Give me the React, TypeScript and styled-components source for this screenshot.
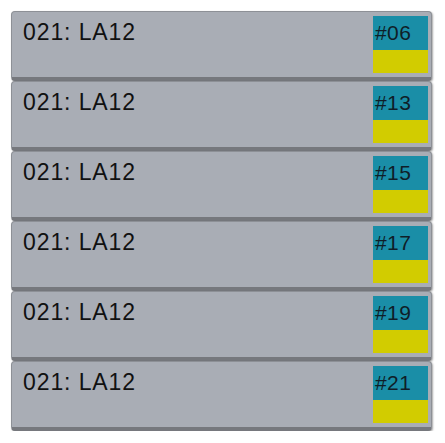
import { FC } from "react";
import styled, { createGlobalStyle } from "styled-components";

const GlobalStyle = createGlobalStyle`
  body {
    margin: 0;
    background: #ffffff;
    font-family: "Liberation Sans", Arial, sans-serif;
  }
`;

const List = styled.div`
  display: flex;
  flex-direction: column;
  padding: 11px 13px 0 11px;
  width: 445px;
  box-sizing: border-box;
`;

const Card = styled.div`
  display: flex;
  justify-content: space-between;
  align-items: flex-start;
  height: 70px;
  box-sizing: border-box;
  padding: 4px 3px 0 11px;
  background: #a9adb5;
  border: 1px solid #8d9096;
  border-bottom: 4px solid #76787d;
  border-radius: 4px;
  box-shadow: 1px 1px 2px rgba(0, 0, 0, 0.35);
`;

const Title = styled.span`
  font-size: 23px;
  line-height: 28px;
  letter-spacing: 0.9px;
  color: #111111;
  padding-top: 2px;
`;

const Badge = styled.div`
  display: flex;
  flex-direction: column;
  width: 55px;
`;

const BadgeTop = styled.div`
  height: 34px;
  background: #1a8ea7;
  color: #0f1e28;
  font-size: 21px;
  line-height: 34px;
  letter-spacing: 0.4px;
  padding-left: 2px;
`;

const BadgeBottom = styled.div`
  height: 23px;
  background: #d2cc00;
`;

interface IRow {
  title: string;
  num: string;
}

const rows: IRow[] = [
  { title: "021: LA12", num: "#06" },
  { title: "021: LA12", num: "#13" },
  { title: "021: LA12", num: "#15" },
  { title: "021: LA12", num: "#17" },
  { title: "021: LA12", num: "#19" },
  { title: "021: LA12", num: "#21" },
];

const Row: FC<IRow> = ({ title, num }) => (
  <Card>
    <Title>{title}</Title>
    <Badge>
      <BadgeTop>{num}</BadgeTop>
      <BadgeBottom />
    </Badge>
  </Card>
);

export default function App() {
  return (
    <>
      <GlobalStyle />
      <List>
        {rows.map((row) => (
          <Row key={row.num} {...row} />
        ))}
      </List>
    </>
  );
}
